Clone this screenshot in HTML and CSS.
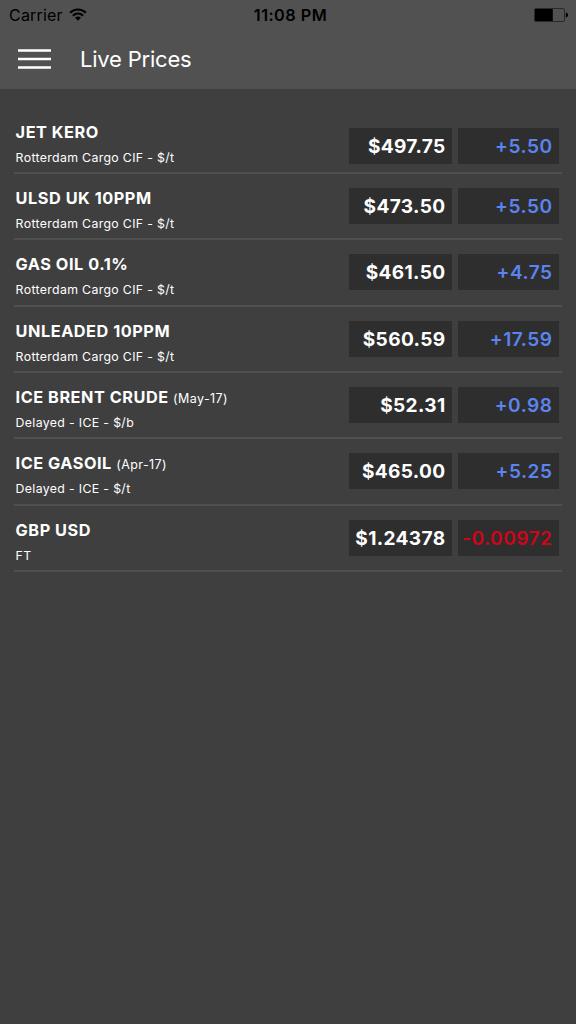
FILE: index.html
```html
<!DOCTYPE html>
<html lang="en">
<head>
<meta charset="utf-8">
<title>Live Prices</title>
<link rel="stylesheet" href="styles.css">
</head>
<body>
<header class="header">
  <div class="status">
    <div class="network"><span class="carrier">Carrier</span>
      <svg class="wifi" width="18" height="13" viewBox="0 0 18 13"><g fill="none" stroke="#000" stroke-width="2.1"><path d="M1.1 4.8C5.5.3 12.5.3 16.9 4.8"/><path d="M3.9 7.7c2.9-2.9 7.3-2.9 10.2 0"/></g><path d="M6 9.7c1.7-1.7 4.3-1.7 6 0l-3 3z"/></svg>
    </div>
    <time class="clock">11:08 PM</time>
    <svg class="battery" width="34" height="14" viewBox="0 0 34 14"><rect x=".5" y=".5" width="30" height="13" rx="1.5" fill="none" stroke="#292929"/><path d="M1 1h17.8v12H1zM31.8 4.5c3 .5 3 4.5 0 5z"/></svg>
  </div>
  <div class="navbar">
    <svg class="menu" width="33" height="20" viewBox="0 0 33 20"><path d="M0 1.5h33M0 10h33M0 18.5h33" stroke="#fff" stroke-width="2.6"/></svg>
    <h1 class="title">Live Prices</h1>
  </div>
</header>
<main class="prices">
  <section class="row first"><div class="product"><h2 class="name">JET KERO</h2><p class="source">Rotterdam Cargo CIF - $/t</p></div><div class="value price">$497.75</div><div class="value change">+5.50</div></section>
  <section class="row"><div class="product"><h2 class="name">ULSD UK 10PPM</h2><p class="source">Rotterdam Cargo CIF - $/t</p></div><div class="value price">$473.50</div><div class="value change">+5.50</div></section>
  <section class="row"><div class="product"><h2 class="name">GAS OIL 0.1%</h2><p class="source">Rotterdam Cargo CIF - $/t</p></div><div class="value price">$461.50</div><div class="value change">+4.75</div></section>
  <section class="row"><div class="product"><h2 class="name">UNLEADED 10PPM</h2><p class="source">Rotterdam Cargo CIF - $/t</p></div><div class="value price">$560.59</div><div class="value change">+17.59</div></section>
  <section class="row"><div class="product"><h2 class="name">ICE BRENT CRUDE <span class="month">(May-17)</span></h2><p class="source">Delayed - ICE - $/b</p></div><div class="value price">$52.31</div><div class="value change">+0.98</div></section>
  <section class="row"><div class="product"><h2 class="name">ICE GASOIL <span class="month">(Apr-17)</span></h2><p class="source">Delayed - ICE - $/t</p></div><div class="value price">$465.00</div><div class="value change">+5.25</div></section>
  <section class="row"><div class="product"><h2 class="name">GBP USD</h2><p class="source">FT</p></div><div class="value price">$1.24378</div><div class="value change down">-0.00972</div></section>
</main>
</body>
</html>
```
FILE: styles.css
```css
* { box-sizing: border-box; }
body { margin: 0; min-height: 1024px; background: #3f3f3f; color: #fff; font-family: Inter, "Liberation Sans", sans-serif; }
h1, h2, p { margin: 0; }
svg { display: block; flex: none; }
.header { height: 89px; background: #515151; }
.status { height: 30px; padding: 0 8px 0 9px; display: grid; grid-template-columns: 1fr auto 1fr; align-items: center; color: #000; font-size: 16px; }
.network { display: flex; align-items: center; gap: 6px; }
.carrier { letter-spacing: .2px; }
.wifi { margin-top: -2px; }
.clock { margin-left: 4px; font-size: 16.3px; font-weight: 600; letter-spacing: .45px; }
.battery { justify-self: end; margin-top: -1px; }
.navbar { height: 58px; padding-left: 18px; display: flex; align-items: center; gap: 29px; }
.title { font-size: 22px; font-weight: 400; line-height: 28px; letter-spacing: -.2px; }
.prices { padding: 18.9px 14px 0; }
.row { height: 66.3px; padding: 14px 3px 0 1.6px; border-bottom: 2px solid #505050; display: grid; grid-template-columns: 1fr 103px 101px; column-gap: 6px; align-items: start; }
.product { white-space: nowrap; }
.name { height: 20px; font-size: 16.3px; line-height: 20.4px; font-weight: 700; letter-spacing: .53px; }
.month { font-size: 12.5px; font-weight: 400; letter-spacing: .4px; }
.source { margin-top: 6.9px; font-size: 12.3px; line-height: 18px; letter-spacing: .35px; }
.value { height: 36px; padding-right: 6.5px; background: #2e2e2e; text-align: right; font-size: 19.1px; line-height: 37px; font-weight: 700; letter-spacing: .35px; white-space: nowrap; }
.first .value { margin-top: 6px; }
.change { color: #5b84ee; font-weight: 600; letter-spacing: .5px; }
.down { color: #cf0519; }
```
